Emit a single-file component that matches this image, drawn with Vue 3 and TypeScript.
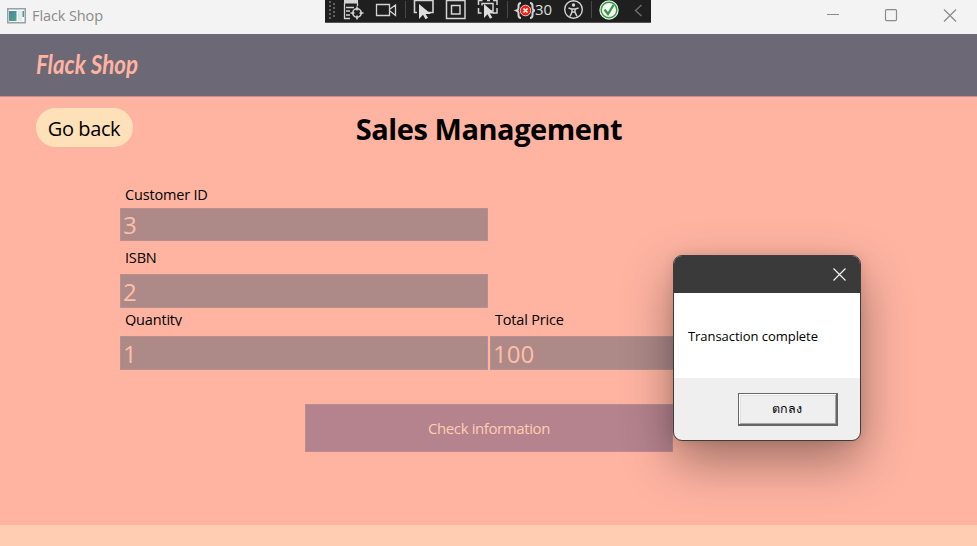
<script setup lang="ts">
import { ref } from 'vue'

const customerId = ref('3')
const isbn = ref('2')
const quantity = ref('1')
const totalPrice = ref('100')
const dialogOpen = ref(true)
</script>

<template>
  <div class="window">
    <header class="titlebar">
      <svg class="app-icon" width="19" height="16" viewBox="0 0 19 16">
        <rect x="0.75" y="0.75" width="17.5" height="14" fill="#f5f8f9" stroke="#9a9fa6" stroke-width="1.5" />
        <rect x="2" y="3" width="7.5" height="10" fill="url(#appGradient)" />
        <rect x="11" y="3" width="4" height="10" fill="#e2e9ec" />
        <rect x="15.5" y="3" width="1.5" height="6" fill="#4c9a91" />
        <defs>
          <linearGradient id="appGradient" x1="0" y1="0" x2="1" y2="1">
            <stop offset="0" stop-color="#4a83b0" />
            <stop offset="1" stop-color="#4fa877" />
          </linearGradient>
        </defs>
      </svg>
      <span class="window-title">Flack Shop</span>
      <svg class="controls" width="132" height="14" viewBox="0 0 132 14" fill="none" stroke="#8b8b8b">
        <path d="M1 5.500H13" />
        <rect x="59.500" y="0.600" width="11" height="11" rx="1" stroke-width="1.2" />
        <path d="M118 .500l12 12M130 .500l-12 12" stroke-width="1.2" />
      </svg>
    </header>

    <div class="debugbar">
      <svg width="210" height="22" viewBox="325 0 210 22" fill="none" stroke="#d4d4d4" stroke-width="1.3">
        <g fill="#626262" stroke="none">
          <path d="M329 1h2v2h-2zM333 3h2v2h-2zM329 5h2v2h-2zM333 7h2v2h-2zM329 9h2v2h-2zM333 11h2v2h-2zM329 13h2v2h-2zM333 15h2v2h-2zM329 17h2v2h-2z" />
        </g>
        <path d="M344.500 3V18.500H350M346 7.500h8M346 11h4M346 15h4M357.500 3v3" />
        <path d="M344 0h14v3.500h-14z" fill="#d4d4d4" stroke="none" />
        <circle cx="357" cy="13" r="4.200" stroke-width="1.600" />
        <path d="M357 6.500v4M357 15.500v4M350.500 13h4M359.500 13h4" stroke-width="1.600" />
        <path d="M376.500 4.500h13v11h-13zM390 9l5.500-4v10.500L390 11" />
        <path d="M405.500 1v17M507.500 1v17" stroke="#484848" stroke-width="1" />
        <path d="M417 12.500h-2.500V0.500h18.500v12H428" stroke-width="1.600" />
        <path d="M419 4v15l4-4.200 2.500 4.500 2.500-1.500-2.500-3.800h5.500z" fill="#dedede" stroke="none" />
        <path d="M446.500 0.500h18.500v18h-18.500zM451.500 5.500h8.500v8.500h-8.500z" stroke-width="1.500" />
        <path d="M478.500 5V.5h4M487 .5h3M493 .5h4V5M478.500 8v5h3M497 8v5h-4M482 5.500V3.500h11V11h-3" stroke-width="1.500" />
        <path d="M484 4v14l3.500-3.800 2.500 4.500 2.300-1.300-2.500-3.800h5z" fill="#dedede" stroke="none" />
        <path d="M521 3c-2 0-2.500 1-2.500 3v2c0 1.500-.7 2-2 2.500 1.300.500 2 1 2 2.500v2c0 2 .500 3 2.500 3M530 3c2 0 2.500 1 2.500 3v2c0 1.500.7 2 2 2.500-1.300.500-2 1-2 2.500v2c0 2-.500 3-2.500 3" stroke-width="2" />
        <circle cx="525.500" cy="10.500" r="5.300" fill="#ef2215" stroke="#f1c9c5" stroke-width="1" />
        <path d="M523.500 8.500l4 4m0-4l-4 4" stroke="#fff" stroke-width="1.700" />
      </svg>
      <span class="error-count">30</span>
      <svg class="debug-end" width="92" height="22" viewBox="558 0 92 22" fill="none" stroke="#d4d4d4" stroke-width="1.400">
        <circle cx="573.500" cy="9.500" r="8.800" />
        <circle cx="573.500" cy="5" r="1.700" fill="#d4d4d4" stroke="none" />
        <path d="M568.500 8l3 1h4l3-1M572 9v3l-2 4.500M575 9v3l2 4.500M572 12h3" stroke-width="1.500" />
        <path d="M591.500 1v17" stroke="#484848" stroke-width="1" />
        <circle cx="609" cy="10" r="9" fill="#f5f9f5" stroke="#e7efe7" />
        <circle cx="609" cy="10" r="7.800" stroke="#369b42" stroke-width="1.400" />
        <path d="M604.500 9.500l3.500 4.500 5.500-9" stroke="#32963d" stroke-width="2.200" />
        <path d="M641.500 5l-6 5.500 6 5.500" stroke="#707070" />
      </svg>
    </div>

    <section class="brandbar">
      <svg class="brand" width="150" height="44" viewBox="0 0 150 44" role="img" aria-label="Flack Shop">
        <text x="1" y="26" class="logo" textLength="102" lengthAdjust="spacingAndGlyphs">Flack Shop</text>
      </svg>
    </section>

    <main class="page">
      <div class="page-head">
        <button class="back">Go back</button>
        <h1>Sales Management</h1>
      </div>
      <form class="form" @submit.prevent="dialogOpen = true">
        <label class="field customer">
          <span>Customer ID</span>
          <input v-model="customerId" />
        </label>
        <label class="field isbn">
          <span>ISBN</span>
          <input v-model="isbn" />
        </label>
        <label class="field quantity">
          <span class="clipped">Quantity</span>
          <input v-model="quantity" />
        </label>
        <label class="field total">
          <span>Total Price</span>
          <input v-model="totalPrice" />
        </label>
        <button class="check" type="submit">Check information</button>
      </form>
    </main>
    <footer class="footer"></footer>

    <div v-if="dialogOpen" class="dialog" role="alertdialog">
      <div class="dialog-title">
        <svg width="13" height="13" viewBox="0 0 13 13" fill="none" stroke="#f4f4f4" stroke-width="1.200" @click="dialogOpen = false">
          <path d="M.5.5l12 12M12.500.5l-12 12" />
        </svg>
      </div>
      <div class="dialog-body"><span>Transaction complete</span></div>
      <div class="dialog-actions">
        <button class="ok" @click="dialogOpen = false">ตกลง</button>
      </div>
    </div>
  </div>
</template>

<style>
body {
  overflow: hidden;
}
</style>

<style scoped>
.window {
  position: relative;
  width: 977px;
  height: 546px;
  display: flex;
  flex-direction: column;
  overflow: hidden;
  background: #ffb4a2;
  color: #000;
  font-family: "Open Sans", "Noto Sans", sans-serif;
}

button,
input {
  margin: 0;
  padding: 0;
  border: 0;
  border-radius: 0;
  outline: 0;
  font-family: inherit;
}

.titlebar {
  height: 34px;
  flex: none;
  display: flex;
  align-items: center;
  box-sizing: border-box;
  padding: 0 19px 3px 7px;
  background: #f3f3f3;
}

.window-title {
  margin-left: 6px;
  color: #8b8b8b;
  font-size: 14.500px;
  letter-spacing: -0.100px;
}

.controls {
  margin-left: auto;
}

.debugbar {
  position: absolute;
  left: 325px;
  top: 0;
  width: 326px;
  height: 22px;
  display: flex;
  border-bottom: 1px solid #555;
  background: #1f1f1f;
}

.error-count {
  width: 23px;
  color: #dedede;
  font-size: 15px;
  line-height: 18px;
  letter-spacing: -0.200px;
}

.debug-end {
  flex: none;
}

.brandbar {
  height: 62px;
  flex: none;
  box-sizing: border-box;
  padding: 14px 0 0 35px;
  background: #6d6875;
  box-shadow: 0 1px #c58f90;
}

.brand {
  display: block;
  overflow: visible;
}

.logo {
  fill: #ffb4a2;
  font-family: Lato, sans-serif;
  font-size: 27px;
  font-style: italic;
  font-weight: 700;
}

.page {
  flex: 1;
}

.page-head {
  height: 84px;
  display: grid;
  grid-template-columns: 97px 1fr 97px;
  align-items: start;
  box-sizing: border-box;
  padding: 12px 35px 0 36px;
}

.back {
  height: 39px;
  padding-top: 2px;
  padding-right: 1px;
  border-radius: 20px;
  background: #ffe1b9;
  color: #000;
  font-size: 20px;
  letter-spacing: -0.400px;
}

h1 {
  margin: 0;
  text-align: center;
  font-size: 29px;
  font-weight: 700;
  line-height: 42px;
  letter-spacing: -0.450px;
}

.form {
  display: grid;
  grid-template-columns: 368px 368px;
  grid-template-rows: 61px 67px 62px;
  column-gap: 2px;
  padding-left: 120px;
}

.field {
  display: flex;
  flex-direction: column;
  justify-content: flex-end;
}

.customer,
.isbn {
  grid-column: 1 / -1;
}

.field span {
  height: 23px;
  padding-left: 5px;
  font-size: 14.500px;
  line-height: 20px;
  letter-spacing: -0.180px;
}

.isbn span,
.total span {
  height: 26px;
}

.field .clipped {
  height: 16px;
  margin-bottom: 10px;
  overflow: hidden;
}

.field input {
  width: 368px;
  height: 34px;
  flex: none;
  box-sizing: border-box;
  padding: 0 0 0 2px;
  border: 1px solid #b88f8d;
  background: #ad8988;
  color: #ffbfa5;
  font-size: 24px;
}

.customer input {
  height: 33px;
}

.check {
  grid-column: 1 / -1;
  width: 368px;
  height: 48px;
  margin: 34px 0 0 185px;
  border: 1px solid #bd8b92;
  background: #b5838d;
  color: #ffcdb2;
  font-size: 15px;
  letter-spacing: -0.400px;
}

.footer {
  height: 21px;
  flex: none;
  background: #ffcdb2;
}

.dialog {
  position: absolute;
  left: 673px;
  top: 255px;
  width: 188px;
  height: 186px;
  display: flex;
  flex-direction: column;
  box-sizing: border-box;
  overflow: hidden;
  border: 1px solid #3c3c3c;
  border-radius: 9px;
  background: #efefef;
  box-shadow: 0 20px 50px rgb(0 0 0 / 38%), 0 0 12px rgb(0 0 0 / 10%);
}

.dialog-title {
  height: 37px;
  flex: none;
  display: flex;
  align-items: center;
  justify-content: flex-end;
  box-sizing: border-box;
  padding: 0 14px 1px 0;
  background: #3a3a3a;
}

.dialog-body {
  height: 85px;
  flex: none;
  display: flex;
  align-items: center;
  padding: 0 0 0 14px;
  background: #fff;
  font-size: 13px;
  letter-spacing: -0.050px;
  white-space: nowrap;
}

.dialog-actions {
  display: flex;
  justify-content: flex-end;
  padding: 15px 22px 0 0;
}

.ok {
  width: 100px;
  height: 33px;
  padding-right: 1px;
  border-style: solid;
  border-width: 1px 2px 2px 1px;
  border-color: #666;
  background: #efefef;
  box-shadow: inset 1px 1px #fff, inset -1px -1px #a5a5a5, inset 2px 2px #e0e0e0;
  color: #000;
  font-size: 12.500px;
}
</style>
